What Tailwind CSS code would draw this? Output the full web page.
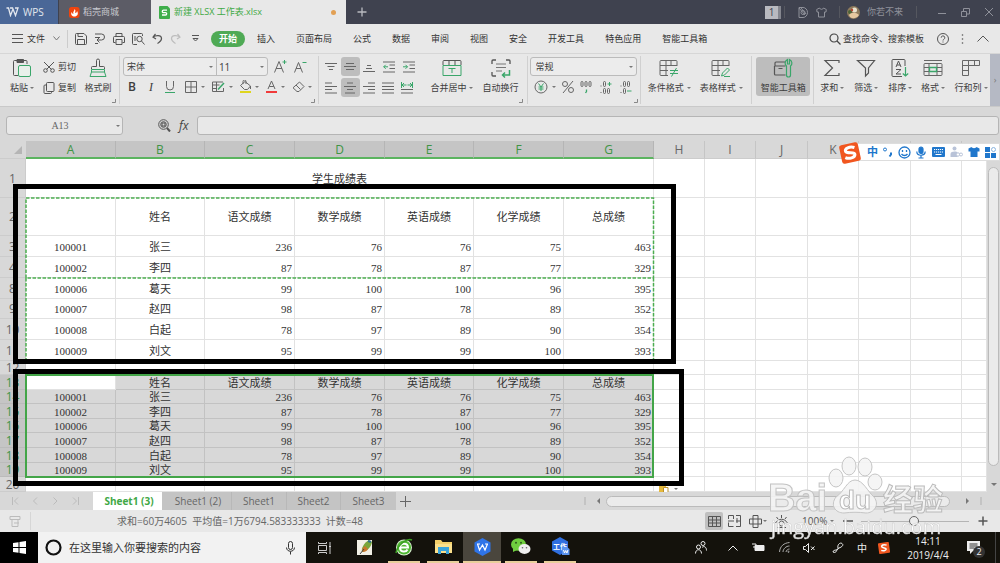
<!DOCTYPE html>
<html lang="zh-CN">

<head>
    <meta charset="UTF-8">
    <meta name="viewport" content="width=device-width, initial-scale=1.0">
    <title>新建 XLSX 工作表.xlsx</title>
    <script src="https://cdn.jsdelivr.net/npm/@tailwindcss/browser@4"></script>
</head>

<body class="h-screen overflow-hidden flex flex-col bg-[#e8e8e8] text-[#444] text-[9px] leading-[12px] font-['Open_Sans','Noto_Sans_CJK_SC',sans-serif]">

    <!-- Title bar -->
    <header class="h-6 shrink-0 flex items-center bg-[#3f424f] text-[#c9cad0]">
        <button class="w-[59px] h-full flex items-center gap-1 pl-[6px] bg-[#4a6797] border-r border-[#3f424f] text-[10px] text-[#e3e7ee]">
            <svg width="13" height="10" viewBox="0 0 13 10" fill="none" stroke="currentColor" stroke-width="1.3"><path d="M.5 1h2l2 7.500L7 2l2.500 6.500L12 1H9M4 1h3M2.500 1l2 7.500"/></svg>
            WPS
        </button>
        <button class="w-[92px] h-full flex items-center gap-[3px] pl-[10px] bg-[#5c5c66]">
            <svg width="11" height="12" viewBox="0 0 11 12"><rect y="1" width="10.500" height="11" rx="2.500" fill="#f0440e"/><path d="M5.500 3c2 2 0 2.500 1 4 1 0 1.500-1.500 1.500-2C10 8 8 10.500 5.500 10.500S1.500 8.500 2.500 6c.8 1.500 1.300 2 2 2C3.500 6 5.500 5 5.500 3z" fill="#fff"/></svg>
            稻壳商城
        </button>
        <button class="w-[195px] h-full flex items-center gap-[4px] pl-[8px] pr-[10px] bg-[#e8e8e8] text-[#3fa845]">
            <svg width="11" height="13" viewBox="0 0 11 13"><path d="M1 0h7.500L11 2.500V12a1 1 0 0 1-1 1H1a1 1 0 0 1-1-1V1a1 1 0 0 1 1-1z" fill="#3fae4b"/><path d="M8 4.200H4.500a1.200 1.200 0 0 0 0 2.400h2a1.200 1.200 0 0 1 0 2.400H3" fill="none" stroke="#fff" stroke-width="1.300"/></svg>
            新建 XLSX 工作表.xlsx
            <span class="ml-auto size-[5px] rounded-full bg-[#e2a054]"></span>
        </button>
        <button class="ml-[11px]" aria-label="新建标签">
            <svg width="10" height="10" viewBox="0 0 10 10" stroke="#b9bac0" stroke-width="1.300"><path d="M5 .5v9M.5 5h9"/></svg>
        </button>
        <div class="ml-auto flex items-center text-[#8f919a]">
            <span class="w-[13px] h-[13px] flex items-center justify-center bg-[#b9bac0] text-[#3f424f] text-[10px]">1</span>
            <span class="w-[3px] h-[13px] bg-[#85878f]"></span>
            <span class="w-px h-3 bg-[#55575f] ml-[3px]"></span>
            <svg class="ml-[13px]" width="10" height="11" viewBox="0 0 10 11" fill="none" stroke="currentColor"><path d="M1 .5h4a4.500 5 0 0 1 0 10H1z"/><circle cx="5" cy="5.500" r="2"/><path d="M1 1l6 7M3 1l5 6"/></svg>
            <svg class="ml-[8px]" width="11" height="11" viewBox="0 0 11 11" fill="none" stroke="currentColor"><path d="M3.500 1L.7 2.500 1 5h1.500v5h6V5H10l.3-2.500L7.500 1C7 2.800 4 2.800 3.500 1z"/></svg>
            <span class="w-px h-3 bg-[#55575f] ml-[12px]"></span>
            <svg class="ml-[7px]" width="13" height="13" viewBox="0 0 13 13"><circle cx="6.500" cy="6.500" r="6.500" fill="#8d7a5c"/><circle cx="7.500" cy="4" r="2.500" fill="#e9e3cf"/><circle cx="3" cy="6" r="2" fill="#4c6438"/><path d="M2 9c2-3 7-3 10 0a6 6 0 0 1-9 2z" fill="#e6c8a0"/><circle cx="5" cy="4" r="1.200" fill="#b5432f"/></svg>
            <span class="ml-[7px] w-[38px]">你若不来</span>
            <span class="w-px h-3 bg-[#55575f] ml-[11px]"></span>
            <button class="ml-[21px]" aria-label="最小化"><svg width="8" height="10" viewBox="0 0 8 10" stroke="currentColor"><path d="M0 6.500h8"/></svg></button>
            <button class="ml-[15px]" aria-label="还原"><svg width="9" height="9" viewBox="0 0 9 9" fill="none" stroke="currentColor"><path d="M.5 3.500h5v5h-5zM2.500 3V.5h6v5.500H6"/></svg></button>
            <button class="ml-[15px] mr-[7px]" aria-label="关闭"><svg width="8" height="8" viewBox="0 0 8 8" stroke="currentColor"><path d="M0 0l8 8M8 0L0 8"/></svg></button>
        </div>
    </header>

    <!-- Menu bar -->
    <nav class="h-[30px] shrink-0 flex items-center border-b border-[#d6d6d6] pl-3 pr-[11px] text-[#333]">
        <button class="flex items-center">
            <svg width="11" height="9" viewBox="0 0 11 9" stroke="#555"><path d="M0 .5h11M0 4.500h11M0 8.500h11"/></svg>
            <span class="ml-1 w-[18px]">文件</span>
            <svg class="ml-[8px]" width="7" height="5" viewBox="0 0 7 5" fill="none" stroke="#777"><path d="M.5.5l3 3.500 3-3.500"/></svg>
        </button>
        <span class="w-px h-[18px] bg-[#ccc] ml-[7px] mr-[7px]"></span>
        <div class="flex items-center gap-[7px] text-[#555]">
            <button aria-label="保存"><svg width="12" height="12" viewBox="0 0 12 12" fill="none" stroke="currentColor"><path d="M1.500.500h7.500l2.500 2.500v7.500a1 1 0 0 1-1 1h-9a1 1 0 0 1-1-1v-9a1 1 0 0 1 1-1zM2.500 11V6.500h7V11M3 .5v3h5"/></svg></button>
            <button aria-label="输出"><svg width="12" height="12" viewBox="0 0 12 12" fill="none" stroke="currentColor"><path d="M1 1h6.500a3 3 0 0 1 0 6H3M5.500 4.500L3 7l2.500 2.500M1 4.500h5M1 10.500h3"/></svg></button>
            <button aria-label="打印"><svg width="12" height="12" viewBox="0 0 12 12" fill="none" stroke="currentColor"><path d="M3 3.500v-3h6v3M2.500 9.500H.5v-5a1 1 0 0 1 1-1h9a1 1 0 0 1 1 1v5h-2M3 6.500h6v5H3z"/></svg></button>
            <button aria-label="打印预览"><svg width="13" height="12" viewBox="0 0 13 12" fill="none" stroke="currentColor"><path d="M5 11.500H1.500a1 1 0 0 1-1-1v-9a1 1 0 0 1 1-1h8a1 1 0 0 1 1 1V3M3 3v5"/><circle cx="7.500" cy="6" r="2.700"/><path d="M9.500 8l3 3.500"/></svg></button>
            <button aria-label="撤销"><svg width="11" height="12" viewBox="0 0 11 12" fill="none" stroke="currentColor" stroke-width="1.200"><path d="M3.500 1L1 4l3 2M1 4c3-2 8-2 8.500 1S7 9 5.500 10.500"/></svg></button>
            <button aria-label="恢复"><svg width="11" height="12" viewBox="0 0 11 12" fill="none" stroke="#bdbdbd" stroke-width="1.200"><path d="M7.500 1L10 4 7 6M10 4C7 2 2 2 1.500 5S4 9 5.500 10.500"/></svg></button>
            <button class="ml-1" aria-label="更多"><svg width="7" height="7" viewBox="0 0 7 7" fill="none" stroke="currentColor"><path d="M0 .5h7M1 3.500h5L3.500 6z"/></svg></button>
        </div>
        <button class="ml-[12px] w-[34px] h-4 rounded-full bg-[#4faa55] text-white font-bold">开始</button>
        <div class="ml-[12px] flex gap-[21px] whitespace-nowrap">
            <button>插入</button>
            <button>页面布局</button>
            <button>公式</button>
            <button>数据</button>
            <button>审阅</button>
            <button>视图</button>
            <button>安全</button>
            <button>开发工具</button>
            <button>特色应用</button>
            <button>智能工具箱</button>
        </div>
        <button class="ml-auto flex items-center gap-[2px] whitespace-nowrap">
            <svg width="12" height="12" viewBox="0 0 12 12" fill="none" stroke="#444" stroke-width="1.200"><circle cx="5" cy="5" r="4"/><path d="M8 8l3.500 3.500"/></svg>
            <span class="w-[84px] text-left">查找命令、搜索模板</span>
        </button>
        <button class="ml-[10px]" aria-label="帮助"><svg width="12" height="12" viewBox="0 0 12 12" fill="none" stroke="#555"><circle cx="6" cy="6" r="5.500"/><path d="M4.200 4.700a1.800 1.800 0 1 1 2.600 1.600Q6 6.700 6 7.500M6 8.500v1"/></svg></button>
        <button class="ml-[12px]" aria-label="更多选项"><svg width="3" height="10" viewBox="0 0 3 10" fill="#555"><circle cx="1.500" cy="1" r=".8"/><circle cx="1.500" cy="5" r=".8"/><circle cx="1.500" cy="9" r=".8"/></svg></button>
        <button class="ml-[13px]" aria-label="收起功能区"><svg width="12" height="7" viewBox="0 0 12 7" fill="none" stroke="#555"><path d="M.5 6.500L6 1l5.500 5.500"/></svg></button>
    </nav>

    <!-- Ribbon -->
    <section class="h-[53px] shrink-0 flex border-b border-[#c9c9c9] pl-[8px] whitespace-nowrap overflow-hidden text-[#3d3d3d]">
        <button class="w-7 flex flex-col items-center pt-[4px]">
            <svg width="20" height="20" viewBox="0 0 20 20" fill="none" stroke="#555"><path d="M6 17.500H2.500a1 1 0 0 1-1-1v-13a1 1 0 0 1 1-1H14a1 1 0 0 1 1 1V6"/><path d="M5 1.500h6.500v3H5z" fill="#555"/><rect x="6.500" y="7.500" width="12" height="11" rx="1.500" stroke="#3aa66a" fill="#e8f0ea"/></svg>
            <span class="mt-[4px] flex items-center gap-[2px]">粘贴<i class="border-x-2 border-t-2 border-x-transparent border-t-[#777]"></i></span>
        </button>
        <div class="ml-[7px] w-[35px] flex flex-col pt-[7px] gap-[9px]">
            <button class="flex items-center gap-[3px]">
                <svg width="12" height="12" viewBox="0 0 12 12" fill="none" stroke="#555"><circle cx="2.500" cy="9.500" r="1.800"/><circle cx="9.500" cy="9.500" r="1.800"/><path d="M3.500 8.500L11 1M8.500 8.500L1 1"/></svg>
                剪切
            </button>
            <button class="flex items-center gap-[3px]">
                <svg width="12" height="12" viewBox="0 0 12 12" fill="none" stroke="#555"><rect x="3.500" y=".5" width="7.500" height="9" rx="1"/><path d="M3.500 3H2a1 1 0 0 0-1 1v6.500a1 1 0 0 0 1 1h5.500a1 1 0 0 0 1-1v-1"/></svg>
                复制
            </button>
        </div>
        <button class="ml-[6px] w-7 flex flex-col items-center pt-[4px]">
            <svg width="18" height="20" viewBox="0 0 18 20" fill="none" stroke="#555"><path d="M2.500 11V9.500a1 1 0 0 1 1-1h4v-6a1.500 1.500 0 0 1 3 0v6h4a1 1 0 0 1 1 1V11"/><path d="M2.500 11.500h13v2.500h-13zM2.500 14L1 18.500h16L15.500 14" stroke="#3aa66a"/></svg>
            <span class="mt-[4px]">格式刷</span>
        </button>
        <svg class="self-end mb-[3px]" width="4" height="4" viewBox="0 0 4 4" fill="none" stroke="#888"><path d="M3.500 0v3.500H0"/></svg>
        <span class="w-px my-[2px] bg-[#d0d0d0] ml-[3px] mr-[3px]"></span>

        <!-- Font group -->
        <div class="w-[191px] flex flex-col pt-[3px]">
            <div class="flex items-center">
                <div class="w-[145px] h-[19px] flex border border-[#bbb] rounded-[3px] bg-[#ececec]">
                    <label class="flex-1 flex items-center relative">
                        <select aria-label="字体" class="appearance-none w-full pl-[3px] outline-none"><option>宋体</option></select>
                        <i class="absolute right-[3px] border-x-2 border-t-2 border-x-transparent border-t-[#777]"></i>
                    </label>
                    <label class="w-[51px] flex items-center relative border-l border-[#bbb]">
                        <select aria-label="字号" class="appearance-none w-full pl-[2px] outline-none text-[10px]"><option>11</option></select>
                        <i class="absolute right-[3px] border-x-2 border-t-2 border-x-transparent border-t-[#777]"></i>
                    </label>
                </div>
                <button class="ml-[6px]" aria-label="增大字号"><svg width="13" height="13" viewBox="0 0 13 13" fill="none" stroke="#666"><path d="M.5 12.500L5 1.500l4.500 11M2 8.500h6"/><path d="M10.500 0v4M8.500 2h4" stroke="#3aa66a"/></svg></button>
                <button class="ml-[7px]" aria-label="减小字号"><svg width="13" height="13" viewBox="0 0 13 13" fill="none" stroke="#666"><path d="M.5 12.500L4.500 2.500l4 10M2 8.500h5"/><path d="M8.500 2.500h4" stroke="#3aa66a"/></svg></button>
            </div>
            <div class="flex items-center pt-[4px] pl-[5px]">
                <button class="w-[8px] text-[12px] font-semibold" aria-label="加粗">B</button>
                <button class="ml-[11px] w-[8px] text-[12px] italic font-['Liberation_Serif']" aria-label="倾斜">I</button>
                <button class="ml-[10px]" aria-label="下划线"><svg width="10" height="12" viewBox="0 0 10 12" fill="none" stroke="#666"><path d="M1.500 0v5.500a3.500 3.500 0 0 0 7 0V0"/><path d="M0 11.500h10" stroke="#3aa66a"/></svg></button>
                <button class="ml-[10px] flex items-center gap-[4px]" aria-label="边框"><svg width="12" height="12" viewBox="0 0 12 12" fill="none" stroke="#666"><path d="M.5.500h11v11H.5zM6 .5v11M.5 6h11"/></svg><i class="border-x-2 border-t-2 border-x-transparent border-t-[#777]"></i></button>
                <button class="ml-[7px] flex items-center gap-[4px]" aria-label="绘图边框"><svg width="13" height="12" viewBox="0 0 13 12" fill="none" stroke="#666"><path d="M11 1H.5v9.500h11V7M.5 4h7M.5 7.500h4M4.500 1v9.500"/><path d="M6 8.500L12 2" stroke="#3aa66a" stroke-width="1.500"/></svg><i class="border-x-2 border-t-2 border-x-transparent border-t-[#777]"></i></button>
                <button class="ml-[6px] flex items-center gap-[3px]" aria-label="填充颜色"><svg width="13" height="13" viewBox="0 0 13 13" fill="none" stroke="#666"><path d="M6 1.500L1.500 5.500l4 4h3l3-3.500zM4 4V1.500A1.500 1.500 0 0 1 7 1.500V4M11.500 6v3"/><path d="M1 12h11" stroke="#dfd51e" stroke-width="2"/></svg><i class="border-x-2 border-t-2 border-x-transparent border-t-[#777]"></i></button>
                <button class="ml-[7px] flex items-center gap-[4px]" aria-label="字体颜色"><svg width="11" height="13" viewBox="0 0 11 13" fill="none" stroke="#666"><path d="M2 9l3.500-8L9 9M3.300 6.500h4.500"/><path d="M0 12h11" stroke="#f03a3a" stroke-width="2"/></svg><i class="border-x-2 border-t-2 border-x-transparent border-t-[#777]"></i></button>
                <button class="ml-[7px] flex items-center gap-[3px]" aria-label="清除"><svg width="13" height="12" viewBox="0 0 13 12" fill="none" stroke="#666"><path d="M7.500 1l4.500 4.500-5 5H5L1 6.800zM4 4l4.500 4.500"/></svg><i class="border-x-2 border-t-2 border-x-transparent border-t-[#777]"></i></button>
            </div>
        </div>
        <svg class="self-end mb-[3px] -ml-[3px]" width="4" height="4" viewBox="0 0 4 4" fill="none" stroke="#888"><path d="M3.500 0v3.500H0"/></svg>
        <span class="w-px my-[2px] bg-[#d0d0d0] ml-[3px] mr-[3px]"></span>

        <!-- Alignment group -->
        <div class="w-[97px] flex flex-col pt-[3px] gap-[2px] text-[#666]">
            <div class="flex">
                <button class="w-[19px] h-[19px] flex items-center justify-center" aria-label="顶端对齐"><svg width="12" height="12" viewBox="0 0 12 12" stroke="currentColor"><path d="M0 2.500h12M2.500 5.500h7M4 8.500h4"/></svg></button>
                <button class="w-[19px] h-[19px] flex items-center justify-center rounded-[3px] bg-[#bdbdbd]" aria-label="垂直居中"><svg width="12" height="12" viewBox="0 0 12 12" stroke="currentColor"><path d="M2 2.500h8M0 5.500h12M2 8.500h8"/></svg></button>
                <button class="w-[19px] h-[19px] flex items-center justify-center" aria-label="底端对齐"><svg width="12" height="12" viewBox="0 0 12 12" stroke="currentColor"><path d="M4 4.500h4M3 7.500h6M0 10.500h12"/></svg></button>
                <button class="w-[20px] h-[19px] flex items-center justify-center" aria-label="减少缩进"><svg width="12" height="12" viewBox="0 0 12 12" fill="none" stroke="currentColor"><path d="M0 1h12M6.500 4H12M6.500 7.500H12M0 11h12"/><path d="M5 5.800H.7M2.700 3.800l-2 2 2 2" stroke="#3aa66a"/></svg></button>
                <button class="w-[20px] h-[19px] flex items-center justify-center" aria-label="增加缩进"><svg width="12" height="12" viewBox="0 0 12 12" fill="none" stroke="currentColor"><path d="M0 1h12M6.500 4H12M6.500 7.500H12M0 11h12"/><path d="M0 5.800h4.500M2.500 3.800l2 2-2 2" stroke="#3aa66a"/></svg></button>
            </div>
            <div class="flex">
                <button class="w-[19px] h-[19px] flex items-center justify-center" aria-label="左对齐"><svg width="12" height="12" viewBox="0 0 12 12" stroke="currentColor"><path d="M0 1h7M0 4.500h12M0 7.500h7M0 11h12"/></svg></button>
                <button class="w-[19px] h-[19px] flex items-center justify-center rounded-[3px] bg-[#bdbdbd]" aria-label="水平居中"><svg width="12" height="12" viewBox="0 0 12 12" stroke="currentColor"><path d="M3 1h6M0 4.500h12M3 7.500h6M1 11h10"/></svg></button>
                <button class="w-[19px] h-[19px] flex items-center justify-center" aria-label="右对齐"><svg width="12" height="12" viewBox="0 0 12 12" stroke="currentColor"><path d="M5 1h7M0 4.500h12M5 7.500h7M0 11h12"/></svg></button>
                <button class="w-[19px] h-[19px] flex items-center justify-center" aria-label="两端对齐"><svg width="12" height="12" viewBox="0 0 12 12" stroke="currentColor"><path d="M0 1h12M0 4.500h12M0 7.500h12M0 11h12"/></svg></button>
                <button class="w-[19px] h-[19px] flex items-center justify-center" aria-label="分散对齐"><svg width="12" height="12" viewBox="0 0 12 12" fill="none" stroke="currentColor"><path d="M0 7.500h12M0 11h12"/><path d="M.5 0v6M11.500 0v6M1 3h4.500M11 3H6.500M3 1L1 3l2 2M9 1l2 2-2 2" stroke="#3aa66a"/></svg></button>
            </div>
        </div>
        <button class="ml-[9px] w-[48px] flex flex-col items-center pt-[4px]">
            <svg width="20" height="20" viewBox="0 0 20 20" fill="none" stroke="#555"><path d="M1 7V3.500a1 1 0 0 1 1-1h16a1 1 0 0 1 1 1V7M7 2.500V7M13 2.500V7"/><path d="M1 7.500h18v10H1zM6.500 10.500h7M10 10.500V15" stroke="#3aa66a"/></svg>
            <span class="mt-[4px] flex items-center gap-[2px]">合并居中<i class="border-x-2 border-t-2 border-x-transparent border-t-[#777]"></i></span>
        </button>
        <button class="ml-[5px] w-[40px] flex flex-col items-center pt-[4px]">
            <svg width="20" height="20" viewBox="0 0 20 20" fill="none" stroke="#555"><path d="M1 6V3a1 1 0 0 1 1-1h3M15 2h3a1 1 0 0 1 1 1v3M1 14v3a1 1 0 0 0 1 1h3" stroke-width="1.300"/><path d="M5 6h10M5 9.500h10M5 13h6" stroke="#777"/><path d="M18.500 12v5H12M14 14.500L11.500 17l2.500 2.500" stroke="#3aa66a" stroke-width="1.500"/></svg>
            <span class="mt-[4px]">自动换行</span>
        </button>
        <svg class="self-end mb-[3px] -ml-[2px]" width="4" height="4" viewBox="0 0 4 4" fill="none" stroke="#888"><path d="M3.500 0v3.500H0"/></svg>
        <span class="w-px my-[2px] bg-[#d0d0d0] ml-[4px] mr-[2px]"></span>

        <!-- Number group -->
        <div class="w-[108px] flex flex-col pt-[3px]">
            <label class="h-[19px] flex items-center relative border border-[#bbb] rounded-[3px] bg-[#ececec]">
                <select aria-label="数字格式" class="appearance-none w-full pl-[5px] outline-none"><option>常规</option></select>
                <i class="absolute right-[3px] border-x-2 border-t-2 border-x-transparent border-t-[#777]"></i>
            </label>
            <div class="flex items-center pt-[4px] pl-[4px]">
                <button class="flex items-center gap-[4px]" aria-label="货币"><svg width="14" height="14" viewBox="0 0 14 14" fill="none" stroke="#666"><circle cx="7" cy="7" r="6"/><path d="M4.500 3.500L7 7l2.500-3.500M7 7v4M4.500 7h5M4.500 9h5" stroke="#3aa66a"/></svg><i class="border-x-2 border-t-2 border-x-transparent border-t-[#777]"></i></button>
                <button class="ml-[5px]" aria-label="百分比"><svg width="14" height="14" viewBox="0 0 14 14" fill="none" stroke="#666"><circle cx="4" cy="4" r="2.500"/><circle cx="10" cy="10" r="2.500"/><path d="M12 1L2 13"/></svg></button>
                <button class="ml-[5px]" aria-label="千位分隔"><svg width="12" height="14" viewBox="0 0 12 14" fill="none" stroke="#666"><rect x="1" y="1.500" width="2" height="5" rx="1"/><rect x="5" y="1.500" width="2" height="5" rx="1"/><rect x="9" y="1.500" width="2" height="5" rx="1"/><path d="M6.500 9.500v2l-1 1.500" stroke="#3aa66a" stroke-width="1.300"/></svg></button>
                <button class="ml-[8px]" aria-label="增加小数位"><svg width="12" height="14" viewBox="0 0 12 14" fill="none" stroke="#666"><path d="M1 5.500v1M1 12v1"/><rect x="3.500" y="1.500" width="2" height="5" rx="1"/><rect x="3.500" y="8.500" width="2" height="5" rx="1"/><rect x="7.500" y="8.500" width="2" height="5" rx="1"/><path d="M9.500 2v4M7.500 4h4" stroke="#3aa66a"/></svg></button>
                <button class="ml-[8px]" aria-label="减少小数位"><svg width="12" height="14" viewBox="0 0 12 14" fill="none" stroke="#666"><path d="M1 5.500v1M1 12v1"/><rect x="3.500" y="1.500" width="2" height="5" rx="1"/><rect x="7.500" y="1.500" width="2" height="5" rx="1"/><rect x="3.500" y="8.500" width="2" height="5" rx="1"/><path d="M7 11h4.500" stroke="#3aa66a"/></svg></button>
            </div>
        </div>
        <svg class="self-end mb-[3px] -ml-[3px]" width="4" height="4" viewBox="0 0 4 4" fill="none" stroke="#888"><path d="M3.500 0v3.500H0"/></svg>
        <span class="w-px my-[2px] bg-[#d0d0d0] ml-[2px] mr-[6px]"></span>

        <!-- Styles and tools -->
        <button class="w-[44px] flex flex-col items-center pt-[4px]">
            <svg width="20" height="20" viewBox="0 0 20 20" fill="none" stroke="#666"><path d="M18 8V3.500a1 1 0 0 0-1-1H2a1 1 0 0 0-1 1v13a1 1 0 0 0 1 1h7M1 7.500h17M1 12.500h8M7 2.500v15M12 2.500v5"/><path d="M11 12.500h8M11 15.500h8M17.500 10l-5 8.500" stroke="#3aa66a"/></svg>
            <span class="mt-[4px] flex items-center gap-[3px]">条件格式<i class="border-x-2 border-t-2 border-x-transparent border-t-[#777]"></i></span>
        </button>
        <button class="ml-[8px] w-[44px] flex flex-col items-center pt-[4px]">
            <svg width="20" height="20" viewBox="0 0 20 20" fill="none" stroke="#666"><path d="M18 8V3.500a1 1 0 0 0-1-1H2a1 1 0 0 0-1 1v13a1 1 0 0 0 1 1h7M1 7.500h17M1 12.500h8M7 2.500v15M12 2.500v5"/><path d="M10.500 18l1-3 5-5 2 2-5 5zM13 18.500h6" stroke="#3aa66a"/></svg>
            <span class="mt-[4px] flex items-center gap-[3px]">表格样式<i class="border-x-2 border-t-2 border-x-transparent border-t-[#777]"></i></span>
        </button>
        <span class="w-px my-[2px] bg-[#d0d0d0] ml-[8px] mr-[4px]"></span>
        <button class="w-[54px] h-[39px] mt-[3px] flex flex-col items-center pt-px rounded-[3px] bg-[#bdbdbd]">
            <svg width="20" height="20" viewBox="0 0 20 20" fill="none" stroke="#555"><path d="M2 8V5a1 1 0 0 1 1-1h9.500M1.500 8h11M1.500 8v8a1 1 0 0 0 1 1H12.500M5.500 10.500h4" stroke-width="1.200"/><path d="M14.500 1.500v4.500h2V1.500c3 1.500 3 5 1 6.500v9a2 2 0 0 1-4 0V8c-2-1.500-2-5 1-6.500z" stroke="#3aa66a" stroke-width="1.200"/></svg>
            <span class="mt-[4px]">智能工具箱</span>
        </button>
        <span class="w-px my-[2px] bg-[#d0d0d0] ml-[3px] mr-[4px]"></span>
        <button class="w-7 flex flex-col items-center pt-[4px]">
            <svg width="18" height="20" viewBox="0 0 18 20" fill="none" stroke="#555" stroke-width="1.200"><path d="M16 5V2.500H2L9.500 10 2 17.500h14V15"/></svg>
            <span class="mt-[4px] flex items-center gap-[2px]">求和<i class="border-x-2 border-t-2 border-x-transparent border-t-[#777]"></i></span>
        </button>
        <button class="ml-[6px] w-7 flex flex-col items-center pt-[4px]">
            <svg width="20" height="20" viewBox="0 0 20 20" fill="none" stroke="#555" stroke-width="1.200"><path d="M1.500 2.500h17l-6 7.500v5l-3 3v-8z"/></svg>
            <span class="mt-[4px] flex items-center gap-[2px]">筛选<i class="border-x-2 border-t-2 border-x-transparent border-t-[#777]"></i></span>
        </button>
        <button class="ml-[6px] w-7 flex flex-col items-center pt-[4px]">
            <svg width="20" height="20" viewBox="0 0 20 20" fill="none" stroke="#555"><path d="M15 8V2.500a1 1 0 0 0-1-1H3a1 1 0 0 0-1 1v15a1 1 0 0 0 1 1h9M6 9l2.500-6L11 9M6.800 7h3.500M6 11.500h5L6 16h5"/><path d="M15.500 9v9M12.800 15.500l2.700 2.500 2.700-2.500" stroke="#3aa66a" stroke-width="1.200"/></svg>
            <span class="mt-[4px] flex items-center gap-[2px]">排序<i class="border-x-2 border-t-2 border-x-transparent border-t-[#777]"></i></span>
        </button>
        <button class="ml-[5px] w-7 flex flex-col items-center pt-[4px]">
            <svg width="20" height="20" viewBox="0 0 20 20" fill="none" stroke="#555"><path d="M1 2.500h18M1 6.500a1 1 0 0 1 1-1h16a1 1 0 0 1 1 1v10a1 1 0 0 1-1 1H2a1 1 0 0 1-1-1zM1 9.500h18M1 13.500h18M6 5.500v12M14 5.500v12" stroke="#666"/><path d="M6.500 9.500h7v4h-7z" stroke="#3aa66a" stroke-width="1.300" fill="#e8e8e8"/></svg>
            <span class="mt-[4px] flex items-center gap-[2px]">格式<i class="border-x-2 border-t-2 border-x-transparent border-t-[#777]"></i></span>
        </button>
        <button class="ml-[5px] w-[38px] flex flex-col items-center pt-[4px]">
            <svg width="20" height="20" viewBox="0 0 20 20" fill="none" stroke="#666"><path d="M1.500 2.500h17v5h-11v10h-6zM7.500 2.500v5M13.500 2.500v5M1.500 7.500h6M1.500 12.500h6"/></svg>
            <span class="mt-[4px] flex items-center gap-[2px]">行和列<i class="border-x-2 border-t-2 border-x-transparent border-t-[#777]"></i></span>
        </button>
        <button class="ml-auto w-[10px] shrink-0 bg-[#b5b9c4] text-[#777]" aria-label="向右滚动">›</button>
    </section>

    <!-- Formula bar -->
    <section class="h-[34px] shrink-0 flex items-center pt-[3px] pl-[6px] pr-px bg-[#d8d8d8]">
        <label class="w-[117px] h-[19px] flex items-center relative border border-[#b5b5b5] rounded-[3px] bg-[#e8e8e8]">
            <input aria-label="名称框" value="A13" class="w-full pr-[9px] text-center text-[10px] outline-none text-[#666] font-['Liberation_Serif']">
            <i class="absolute right-[2px] border-x-2 border-t-2 border-x-transparent border-t-[#777]"></i>
        </label>
        <svg class="ml-[35px]" width="13" height="13" viewBox="0 0 13 13" fill="none" stroke="#555"><circle cx="5.500" cy="5.500" r="4.800"/><circle cx="5.500" cy="5.500" r="2.800"/><path d="M4 4h3v3H4z"/><path d="M9 9l3 3.500" stroke-width="2"/></svg>
        <span class="ml-[8px] w-[18px] text-[12px] italic text-[#444]">fx</span>
        <input aria-label="编辑栏" class="flex-1 h-[19px] border border-[#b5b5b5] rounded-[3px] bg-[#e8e8e8]">
    </section>

    <!-- Sheet -->
    <main class="flex-1 min-h-0 flex relative overflow-hidden bg-white">
        <div class="flex-1 min-w-0 overflow-hidden">
            <table class="w-full table-fixed border-separate border-spacing-0 text-[11px] leading-[11px] text-[#333] font-['Liberation_Serif','Noto_Sans_CJK_SC',serif]">
                <colgroup>
                    <col class="w-[26px]">
                    <col class="w-[90px]"><col class="w-[89px]"><col class="w-[90px]"><col class="w-[90px]"><col class="w-[89px]"><col class="w-[90px]"><col class="w-[90px]">
                    <col class="w-[51px]"><col class="w-[51px]"><col class="w-[52px]"><col class="w-[51px]"><col class="w-[52px]"><col class="w-[51px]">
                    <col>
                </colgroup>
                <thead>
                    <tr class="h-[18px]" id="columnHeads"></tr>
                </thead>
                <tbody id="sheetRows"></tbody>
            </table>
        </div>

        <!-- Vertical scrollbar -->
        <div class="w-[13px] shrink-0 flex flex-col items-center bg-[#d8d8d8] pt-[26px] pb-[6px]">
            <div class="w-[11px] h-[299px] rounded-full border border-[#bbb] bg-[#ebebeb]"></div>
            <i class="mt-auto border-x-[3px] border-t-[3px] border-x-transparent border-t-[#777]"></i>
        </div>

        <!-- Copied ranges, selection and marker frames -->
        <svg class="absolute left-[25px] top-[56px]" width="630" height="166" viewBox="0 0 630 166" fill="none" stroke="#4cae50" stroke-width="1.500" stroke-dasharray="3.500 1.500"><path d="M1 1h627.500v80H1zM1 81v84M628.500 81v84"/></svg>
        <div class="absolute left-[25px] top-[233px] w-[629px] h-[104px] border-2 border-[#43a548]"></div>
        <div class="absolute left-[13px] top-[43px] w-[663px] h-[180px] border-5 border-black"></div>
        <div class="absolute left-[13px] top-[228px] w-[671px] h-[117px] border-5 border-black"></div>
        <svg class="absolute left-[659px] top-[344px]" width="20" height="9" viewBox="0 0 20 9"><path d="M0 1h7v6H0z" fill="#e5b93c"/><path d="M4.500 2.500H9v5.500H4.500z" fill="#fff" stroke="#b98f2a"/><path d="M15 3h4l-2 2z" fill="#777"/></svg>

        <!-- Input method toolbar -->
        <div class="absolute right-0 top-[2px] h-[18px] w-[154px] pl-[20px] pr-[3px] flex items-center justify-between bg-white border border-[#ddd] text-[#2077cc]">
            <svg class="absolute -left-[9px] -top-[3px]" width="24" height="24" viewBox="0 0 24 24"><g transform="rotate(-12 12 12)"><rect x="2.500" y="2.500" width="19" height="19" rx="2.500" fill="#f1561f"/><path d="M17.500 7.500C13 5 7.500 6.500 8 9.500s9 2 8.500 5-6.500 3.500-10 1" fill="none" stroke="#fff" stroke-width="3"/></g></svg>
            <span class="mr-1 text-[11px] font-bold">中</span>
            <svg class="mr-1" width="10" height="12" viewBox="0 0 10 12" fill="none" stroke="currentColor"><circle cx="2" cy="3.500" r="1.500"/><path d="M8 6.500v2l-1.500 2" stroke-width="2"/></svg>
            <svg class="mr-1" width="13" height="13" viewBox="0 0 13 13" fill="none" stroke="currentColor" stroke-width="1.300"><circle cx="6.500" cy="6.500" r="5.500"/><path d="M4.500 4v2M8.500 4v2M3.500 8c1.500 2 4.500 2 6 0"/></svg>
            <svg class="mr-1" width="10" height="13" viewBox="0 0 10 13" fill="none" stroke="currentColor" stroke-width="1.200"><rect x="3" y="1" width="4" height="6.500" rx="2" fill="currentColor"/><path d="M.8 5.500c0 5 8.400 5 8.400 0M5 9.500V12M2.500 12h5"/></svg>
            <svg class="mr-1" width="13" height="10" viewBox="0 0 13 10"><rect width="13" height="10" rx="1" fill="currentColor"/><path d="M2 2.500h9M2 5h9" stroke="#fff" stroke-dasharray="1.200 .8"/><path d="M3.500 7.500h6" stroke="#fff"/></svg>
            <svg class="mr-1" width="13" height="12" viewBox="0 0 13 12" fill="#b9c3d8"><circle cx="4.500" cy="2.500" r="2"/><path d="M.5 11V8c0-3 7-3 7-1v4z"/><circle cx="8" cy="8.500" r="1.700" fill="#fff" stroke="#b9c3d8"/><circle cx="11" cy="8.500" r="1.500" fill="#fff" stroke="#b9c3d8"/></svg>
            <svg class="mr-1" width="12" height="12" viewBox="0 0 12 12" fill="currentColor"><path d="M3.500 1L.5 2.500v3h2V11h7V5.500h2v-3L8.500 1C8 2.500 4 2.500 3.500 1z"/></svg>
            <svg width="11" height="11" viewBox="0 0 11 11" fill="currentColor"><path d="M0 0h5v5H0zM0 6h5v5H0zM6 6h5v5H6z"/><circle cx="8.500" cy="2.500" r="2" fill="none" stroke="#8bb4de"/></svg>
        </div>
    </main>

    <!-- Sheet tabs -->
    <section class="h-[18px] shrink-0 flex items-center bg-[#d8d8d8] text-[10px] text-[#666]">
        <div class="w-[93px] flex items-center gap-[13px] pl-3">
            <svg width="7" height="8" viewBox="0 0 7 8" fill="none" stroke="#bbb"><path d="M.5 0v8M6 .5L2.500 4 6 7.500"/></svg>
            <svg width="7" height="8" viewBox="0 0 7 8" fill="none" stroke="#bbb"><path d="M5 .5L1.500 4 5 7.500"/></svg>
            <svg width="7" height="8" viewBox="0 0 7 8" fill="none" stroke="#bbb"><path d="M1.500.5L5 4 1.500 7.500"/></svg>
            <svg width="7" height="8" viewBox="0 0 7 8" fill="none" stroke="#bbb"><path d="M6.500 0v8M1 .5L4.500 4 1 7.500"/></svg>
        </div>
        <button class="w-[69px] h-full pl-[3px] bg-white text-[#3fa845] font-bold">Sheet1 (3)</button>
        <button class="w-[70px] h-full pl-[3px] bg-[#c4c4c4] border-r border-[#b8b8b8]">Sheet1 (2)</button>
        <button class="w-[55px] h-full bg-[#c4c4c4] border-r border-[#b8b8b8]">Sheet1</button>
        <button class="w-[54px] h-full bg-[#c4c4c4] border-r border-[#b8b8b8]">Sheet2</button>
        <button class="w-[55px] h-full bg-[#c4c4c4]">Sheet3</button>
        <button class="ml-[4px]" aria-label="新建工作表"><svg width="11" height="11" viewBox="0 0 11 11" stroke="#666"><path d="M5.500 0v11M0 5.500h11"/></svg></button>
        <div class="ml-auto w-[418px] flex items-center">
            <span class="w-[2px] h-2 bg-[#c4c4c4] ml-[2px]"></span>
            <i class="ml-[11px] border-y-[3px] border-r-[3px] border-y-transparent border-r-[#777]"></i>
            <div class="ml-[6px] flex-1 h-[11px] rounded-full border border-[#bbb] bg-[#ebebeb]"></div>
            <i class="ml-[16px] border-y-[3px] border-l-[3px] border-y-transparent border-l-[#777]"></i>
            <span class="w-[2px] h-2 bg-[#c4c4c4] ml-[11px] mr-[18px]"></span>
        </div>
    </section>

    <!-- Status bar -->
    <section class="h-[22px] shrink-0 flex items-center pl-[9px] pr-3 text-[9px] text-[#666]">
        <svg width="12" height="12" viewBox="0 0 12 12" fill="none" stroke="#bbb"><path d="M1 1.500h10v3H1zM3 4.500v7h6v-7M5 8h5"/></svg>
        <span class="w-px h-[18px] bg-[#d6d6d6] ml-[9px] mr-[86px]"></span>
        <span class="whitespace-pre text-[10px]">求和=60万4605  平均值=1万6794.583333333  计数=48</span>
        <div class="ml-auto flex items-center text-[#555]">
            <button class="w-[18px] h-[18px] flex items-center justify-center rounded-[2px] bg-[#c0c0c0]" aria-label="普通视图"><svg width="13" height="11" viewBox="0 0 13 11" fill="none" stroke="currentColor"><path d="M.5.500h12v10H.5zM.5 4h12M.5 7h12M4.500.5v10M8.500.5v10"/></svg></button>
            <button class="ml-[5px]" aria-label="分页预览"><svg width="13" height="12" viewBox="0 0 13 12" fill="none" stroke="currentColor"><path d="M.5 4V.5h5V4M.5 7.500v4h5M8 .5h4.500M12.500.5v11H8M9 3v5M0 6h6M8 6h4"/></svg></button>
            <button class="ml-[8px] flex items-center gap-px" aria-label="页面布局视图"><svg width="13" height="13" viewBox="0 0 13 13" fill="none" stroke="currentColor"><path d="M4 .500h5v12H4zM.5 4h12v5H.5z"/></svg><i class="border-x-2 border-t-2 border-x-transparent border-t-[#777]"></i></button>
            <button class="ml-[8px]" aria-label="护眼模式"><svg width="13" height="13" viewBox="0 0 13 13" fill="none" stroke="currentColor"><path d="M.5 8c3-5 9-5 12 0M6.500 0v3M1.500 2l1.500 2M11.500 2L10 4M2 12.500h9"/><circle cx="6.500" cy="8.500" r="2.500"/></svg></button>
            <span class="ml-[14px] w-[28px] text-[10px]">100%</span>
            <i class="border-x-2 border-t-2 border-x-transparent border-t-[#777]"></i>
            <button class="ml-[9px]" aria-label="缩小"><svg width="10" height="10" viewBox="0 0 10 10" stroke="currentColor" stroke-width="1.500"><path d="M0 5h10"/></svg></button>
            <label class="relative ml-[8px] w-[108px] h-[18px] flex items-center">
                <input type="range" aria-label="显示比例" min="0" max="100" value="48" class="absolute inset-0 opacity-0">
                <span class="w-full h-px bg-[#b5b5b5]"></span>
                <span class="absolute left-[48px] size-[10px] rounded-full border border-[#666] bg-[#ececec]"></span>
            </label>
            <button class="ml-[9px]" aria-label="放大"><svg width="10" height="10" viewBox="0 0 10 10" stroke="currentColor" stroke-width="1.500"><path d="M5 .5v9M.5 5h9"/></svg></button>
        </div>
    </section>

    <!-- Taskbar -->
    <footer class="h-[31px] shrink-0 flex items-stretch bg-[#14120c] text-[#eee]">
        <button class="w-[38px] flex items-center justify-center bg-black" aria-label="开始菜单"><svg width="13" height="13" viewBox="0 0 13 13" fill="#fff"><path d="M0 2l5.500-.8V6H0zM6.500 1L13 0v6H6.500zM0 7h5.500v4.800L0 11zM6.500 7H13v6l-6.500-1z"/></svg></button>
        <label class="w-[268px] flex items-center bg-[#f2f2f2] pl-[7px] pr-[11px]">
            <svg width="17" height="17" viewBox="0 0 17 17" fill="none" stroke="#111" stroke-width="2.200"><circle cx="8.500" cy="8.500" r="7"/></svg>
            <input aria-label="搜索" placeholder="在这里输入你要搜索的内容" class="ml-[7px] flex-1 min-w-0 outline-none text-[11px] placeholder:text-[#333]">
            <svg width="9" height="14" viewBox="0 0 9 14" fill="none" stroke="#333"><rect x="2.500" y=".5" width="4" height="8" rx="2"/><path d="M.5 6.500c0 5 8 5 8 0M4.500 10.500v3"/></svg>
        </label>
        <button class="w-[38px] flex items-center justify-center" aria-label="任务视图"><svg width="14" height="12" viewBox="0 0 14 12" fill="none" stroke="#ccc"><path d="M.5 0v1.500h8V0M.5 12v-1.500h8V12M.5 3.500h8v5h-8zM12 0v12M11 4.500h2"/></svg></button>
        <button class="w-[42px] flex items-center justify-center" aria-label="画图"><svg width="16" height="17" viewBox="0 0 16 17"><path d="M0 1h15v15H0z" fill="#f2f0e6"/><path d="M5 13c-1-4 2-9 7-12l3 2c-1 5-4 8-7 9z" fill="#7aa63a"/><path d="M5 12c0-2 1-4 3-5l3 3c-1 2-3 3-5 3z" fill="#c9762a"/><path d="M3 15l4-5" stroke="#444"/><path d="M11 2l3 1" stroke="#2e6f8e" stroke-width="2"/></svg></button>
        <div class="flex pl-[2px]">
            <button class="w-8 mr-[7px] flex items-center justify-center border-b-2 border-[#e8cf9b]" aria-label="浏览器"><svg width="18" height="18" viewBox="0 0 18 18"><circle cx="9" cy="9.500" r="8" fill="#d9efd0"/><circle cx="9" cy="9.500" r="7" fill="#4fb733"/><path d="M5 9.500h8c0-5-8-5-8 0s6 5 7.500 2" fill="none" stroke="#fff" stroke-width="2"/><path d="M1 15C3 6 12 0 17 2" fill="none" stroke="#3b9e22" stroke-width="1.500"/></svg></button>
            <button class="w-8 mr-[4px] flex items-center justify-center border-b-2 border-[#e8cf9b]" aria-label="文件资源管理器"><svg width="17" height="15" viewBox="0 0 17 15"><path d="M0 1h6l1.500 2H17v11H0z" fill="#f3cf6b"/><path d="M0 5h17v9H0z" fill="#fbe08c"/><path d="M3 15V8h11v7h-3v-3H6v3z" fill="#3aa4dc"/></svg></button>
            <button class="w-[38px] mr-[4px] flex items-center justify-center bg-[#4a463d] border-b-2 border-[#e8cf9b]" aria-label="WPS"><svg width="17" height="18" viewBox="0 0 17 18"><path d="M8.500 0L16.500 4.500v9l-8 4.500-8-4.500v-9z" fill="#2f74e8"/><path d="M3.500 6l2 6L8.500 7l2.500 5 2.500-6M3 6h3M11 6h3" fill="none" stroke="#fff" stroke-width="1.200"/></svg></button>
            <button class="w-8 mr-[7px] flex items-center justify-center border-b-2 border-[#e8cf9b]" aria-label="微信"><svg width="20" height="17" viewBox="0 0 20 17"><ellipse cx="7.500" cy="6.500" rx="7.500" ry="6.300" fill="#6fce3f"/><path d="M2 10l0 4 4-2z" fill="#6fce3f"/><circle cx="5" cy="4.800" r="1" fill="#2d5a1b"/><circle cx="10" cy="4.800" r="1" fill="#2d5a1b"/><ellipse cx="13.500" cy="11" rx="6" ry="5" fill="#eee"/><circle cx="11.500" cy="9.800" r=".8" fill="#666"/><circle cx="15.500" cy="9.800" r=".8" fill="#666"/></svg></button>
            <button class="w-8 flex items-center justify-center border-b-2 border-[#e8cf9b]" aria-label="工作助手"><svg width="19" height="19" viewBox="0 0 19 19"><path d="M9 0l8 4.500v9L9 18l-8-4.500v-9z" fill="#2f6fe0"/><text x="2" y="12" font-size="7" font-weight="bold" fill="#fff">工作</text><path d="M11 10h5l2.500 2V18H11z" fill="#5b94ef"/><path d="M12.500 13l1 3 1.200-2.500 1.200 2.500 1-3" fill="none" stroke="#fff"/></svg></button>
        </div>
        <div class="ml-auto flex items-center">
            <svg width="12" height="13" viewBox="0 0 12 13" fill="none" stroke="currentColor"><circle cx="8" cy="2.500" r="2"/><circle cx="3.500" cy="6" r="2"/><path d="M.5 12.500c0-5 6-5 6 0M7 6.500c2-2 4.500-.5 4.500 3"/></svg>
            <svg class="ml-[21px]" width="10" height="6" viewBox="0 0 10 6" fill="none" stroke="currentColor"><path d="M.5 5.500L5 1l4.500 4.500"/></svg>
            <svg class="ml-[14px]" width="13" height="9" viewBox="0 0 13 9" fill="none" stroke="currentColor"><path d="M3 2.500h9v5H3z" fill="currentColor"/><path d="M0 1h4v3H1"/></svg>
            <svg class="ml-[14px]" width="11" height="11" viewBox="0 0 11 11" fill="none" stroke="#aaa"><path d="M.5 10C1 4 5 1 10.500.5M4 10c0-3 3-6 6.500-6M7 10c0-1.500 2-3 3.500-3"/><circle cx="9.500" cy="9.800" r=".6"/></svg>
            <svg class="ml-[13px]" width="12" height="10" viewBox="0 0 12 10" fill="none" stroke="currentColor"><path d="M.5 3.500h2l3-3v9l-3-3h-2zM8 3.500l3.500 3.500M11.500 3.500L8 7"/></svg>
            <svg class="ml-[17px]" width="12" height="12" viewBox="0 0 12 12" fill="none" stroke="currentColor"><path d="M1 10c4 2 3-3 6-4s5-3 3-4.500S5 3 6 6 1 7 1 10z"/></svg>
            <span class="ml-[13px] w-[11px] text-[10px]">中</span>
            <svg class="ml-[10px]" width="12" height="12" viewBox="0 0 12 12"><g transform="rotate(-8 6 6)"><rect x=".5" y=".5" width="11" height="11" rx="1" fill="#f1561f"/><path d="M9 3.500C6 2 3.500 3 4 4.500s4.500 1.500 4 3-3.500 1.500-5 .5" fill="none" stroke="#fff" stroke-width="1.500"/></g></svg>
            <div class="ml-[14px] w-[48px] text-center text-[10px] leading-[14px] whitespace-nowrap">14:11<br>2019/4/4</div>
            <button class="relative ml-[15px] mr-[10px] w-[18px]" aria-label="通知"><svg width="13" height="14" viewBox="0 0 13 14"><path d="M0 0h13v10H6l-3 3v-3H0z" fill="#eee"/><path d="M2.500 3h8M2.500 5h8M2.500 7h5" stroke="#333"/></svg><span class="absolute left-[6px] top-[5px] size-[12px] rounded-full bg-[#333] flex items-center justify-center text-[9px]">2</span></button>
            <span class="w-px h-full bg-[#444] mr-[4px]"></span>
        </div>
    </footer>

    <!-- Watermark -->
    <svg class="fixed right-[45px] bottom-[16px]" width="190" height="98" viewBox="0 0 190 98" font-family="'Liberation Sans','Noto Sans CJK SC',sans-serif" aria-hidden="true">
        <g fill="#f4f4f4" fill-opacity=".9" stroke="#c4c4c4">
            <ellipse cx="71" cy="29" rx="7" ry="9"/><ellipse cx="84" cy="17" rx="7" ry="9"/><ellipse cx="100" cy="18" rx="7" ry="9"/><ellipse cx="110" cy="33" rx="7" ry="8"/>
            <path d="M90 31c8 0 13 12 19 17 6 8 0 16-8 16-8-1-14-1-22 0-9 0-14-8-8-16 8-5 11-17 19-17z"/>
            <g font-weight="bold">
                <text x="3" y="62" font-size="38">Bai</text>
                <text x="74" y="60" font-size="26" fill="#fff" stroke="#bbb">du</text>
                <text x="118" y="61" font-size="30" stroke="#bbb">经验</text>
            </g>
        </g>
        <text x="6" y="85" font-size="20" font-family="'Open Sans'" fill="#fff" fill-opacity=".9" stroke="#ccc" stroke-width=".5">jingyan.baidu.com</text>
    </svg>

</body>
<script>

    const headers = ["", "姓名", "语文成绩", "数学成绩", "英语成绩", "化学成绩", "总成绩"]
    const students = [
        [100001, "张三", 236, 76, 76, 75, 463],
        [100002, "李四", 87, 78, 87, 77, 329],
        [100006, "葛天", 99, 100, 100, 96, 395],
        [100007, "赵四", 98, 87, 78, 89, 352],
        [100008, "白起", 78, 97, 89, 90, 354],
        [100009, "刘文", 95, 99, 99, 100, 393],
    ]

    // row number, row height, values
    const rows = [
        [1, "h-[39px]", null],
        [2, "h-[38px]", headers],
        [3, "h-[21px]", students[0]],
        [4, "h-[21px]", students[1]],
        [8, "h-[21px]", students[2]],
        [9, "h-[20px]", students[3]],
        [10, "h-[21px]", students[4]],
        [11, "h-[21px]", students[5]],
        [12, "h-[14px]", []],
        [13, "h-[15px]", headers],
        [14, "h-[14px]", students[0]],
        [15, "h-[15px]", students[1]],
        [16, "h-[14px]", students[2]],
        [17, "h-[15px]", students[3]],
        [18, "h-[15px]", students[4]],
        [19, "h-[14px]", students[5]],
        [20, "h-[15px]", []],
    ]

    const columnHeads = document.getElementById("columnHeads")
    let heads = `<th class="p-0 bg-[#d8d8d8] border-b border-[#ccc]"><svg class="ml-auto mr-1" width="8" height="8"><path d="M8 0v8H0z" fill="#b5b5b5"/></svg></th>`
    for (const letter of "ABCDEFGHIJKLM") {
        const active = letter <= "G"
        heads += `<th class="p-0 font-normal text-[12px] font-['Open_Sans'] border-r ${active ? "bg-[#c5c5c5] text-[#3f9444] border-r-[#b5b5b5] border-b-2 border-b-[#5cb460]" : "bg-[#d8d8d8] text-[#666] border-r-[#c5c5c5] border-b border-b-[#ccc]"}">${letter}</th>`
    }
    columnHeads.innerHTML = heads + `<th class="bg-[#d8d8d8] border-b border-[#ccc]"></th>`

    const sheetRows = document.getElementById("sheetRows")
    rows.forEach(([number, height, values]) => {
        const selected = number >= 13 && number <= 19
        const row = sheetRows.insertRow()
        row.className = height
        let html = `<th class="p-0 font-normal text-[12px] font-['Open_Sans'] border-b border-r ${selected ? "bg-[#c5c5c5] text-[#3f9444] border-[#bbb]" : "bg-[#d8d8d8] text-[#666] border-[#ccc]"}">${number}</th>`
        let start = 0
        if (values === null) {
            html += `<td colspan="7" class="px-0 pb-0 pt-[2px] text-center border-b border-r border-[#e2e2e2]">学生成绩表</td>`
            start = 7
        }
        for (let i = start; i < 14; i++) {
            const value = values && i < values.length ? values[i] : ""
            const align = i > 1 && typeof value === "number" ? "text-right pr-[2px]" : "text-center pr-0"
            const fill = selected && i < 7 && !(number === 13 && i === 0) ? "bg-[#d8d8d8] border-[#c2c2c2]" : "border-[#e2e2e2]"
            html += `<td class="pt-[2px] pb-0 pl-0 border-b border-r ${align} ${fill}">${value}</td>`
        }
        row.innerHTML = html
    })

</script>

</html>
